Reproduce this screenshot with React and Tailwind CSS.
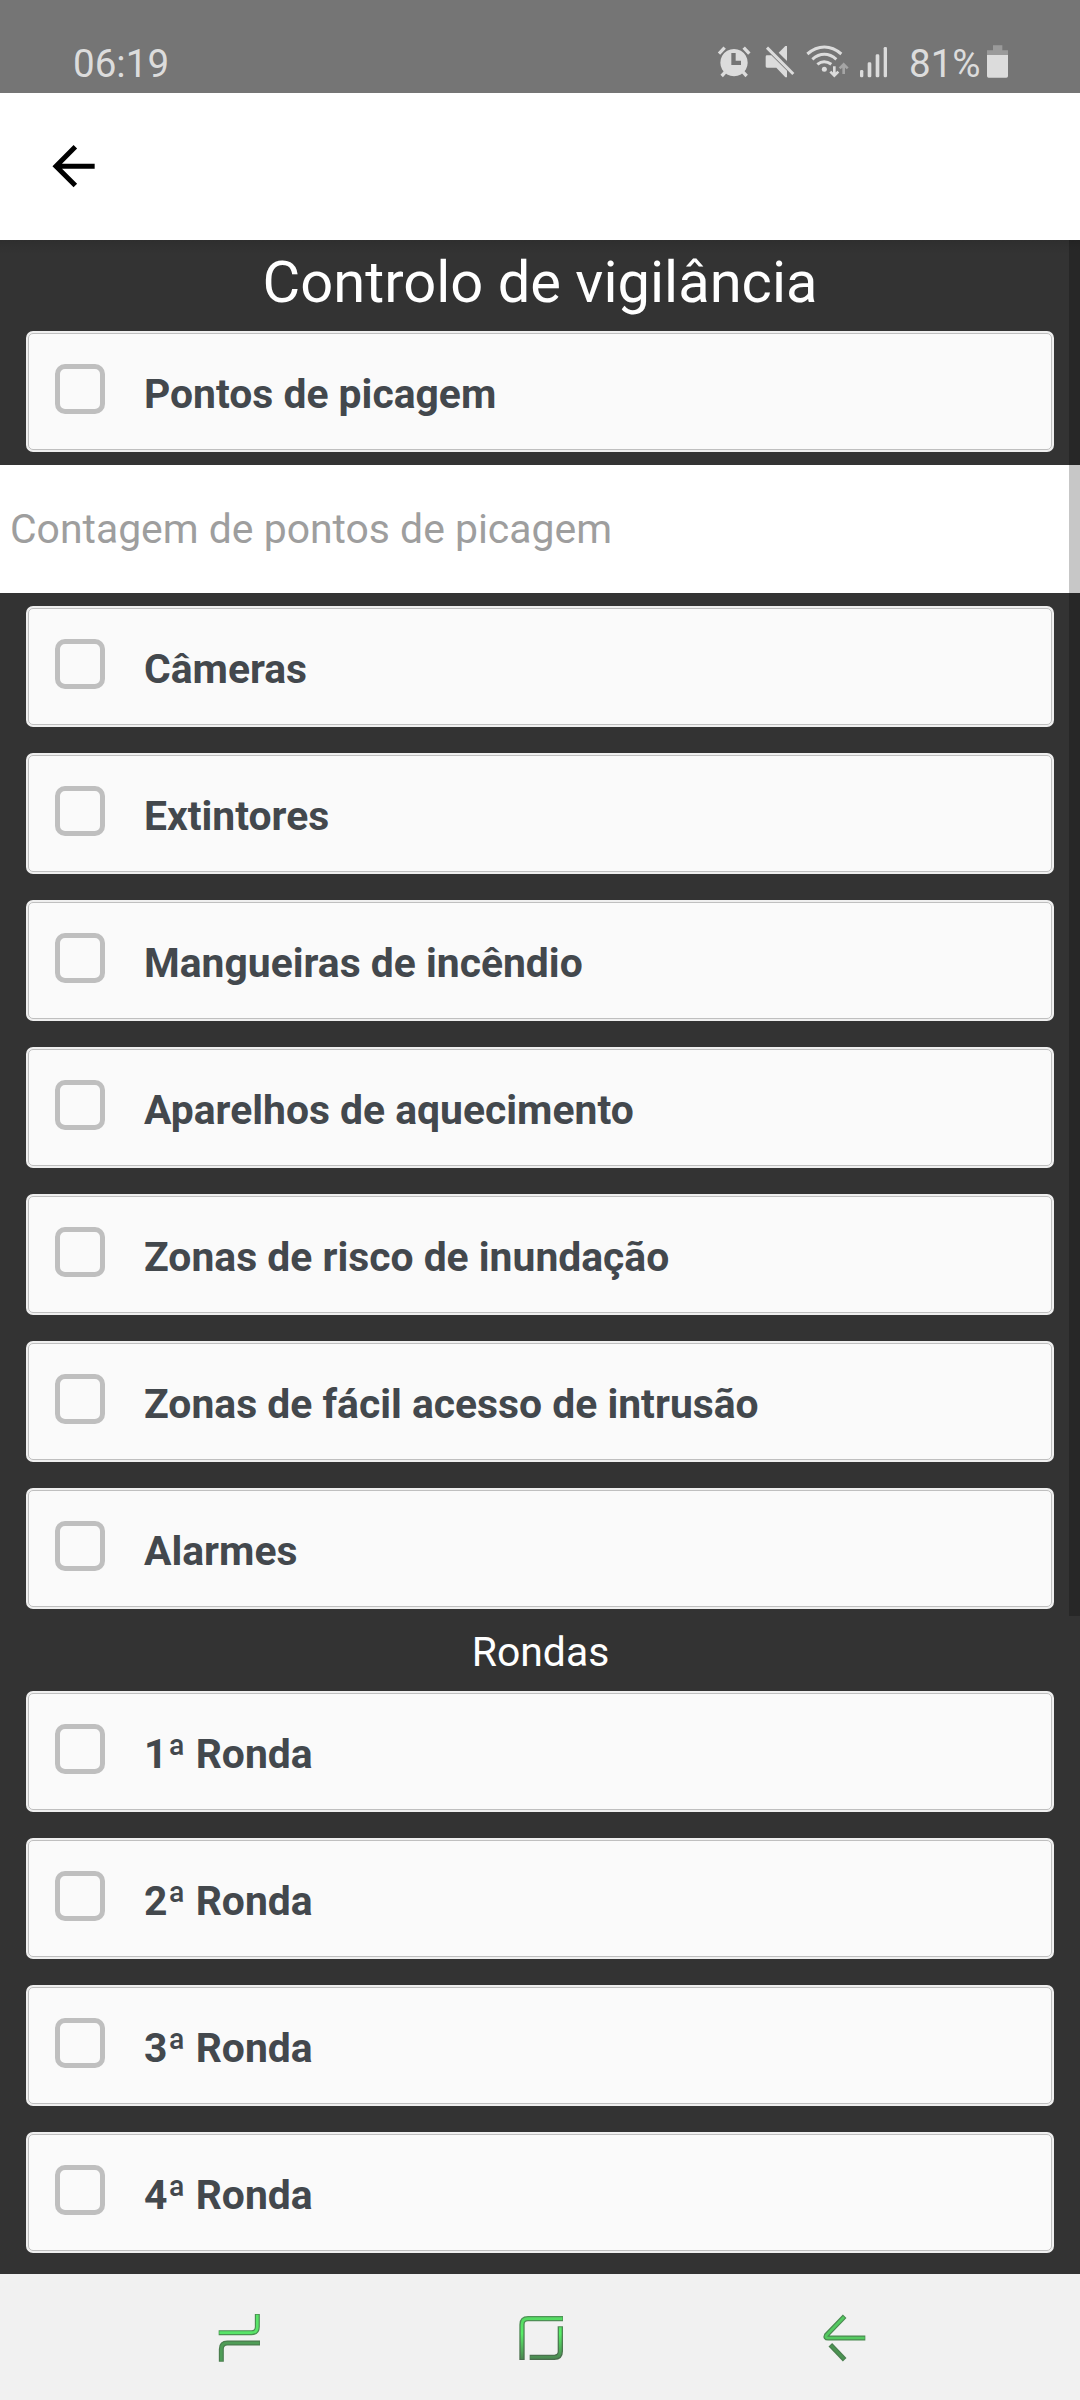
import React from "react";

const CHECKS = [
  "Câmeras",
  "Extintores",
  "Mangueiras de incêndio",
  "Aparelhos de aquecimento",
  "Zonas de risco de inundação",
  "Zonas de fácil acesso de intrusão",
  "Alarmes",
];
const ROUNDS = ["1ª Ronda", "2ª Ronda", "3ª Ronda", "4ª Ronda"];

function CheckCard({ label }) {
  return (
    <div className="mx-[26px] h-[121px] shrink-0 rounded-[7px] border-2 border-[#efefef] bg-[#fafafa]">
      <div className="flex h-full items-start rounded-[5px] border border-[#bfbfbf] pl-[26px]">
        <div className="mt-[30.4px] size-[50px] rounded-[10px] border-5 border-[#bfbfbf]" />
        <div className="mt-[34px] ml-[39px] text-[40.85px] leading-[52px] font-bold whitespace-nowrap text-[#43484d]">
          {label}
        </div>
      </div>
    </div>
  );
}

function StatusBar() {
  return (
    <div className="flex h-[93px] shrink-0 items-start bg-[#757575] pl-[73px] text-[38.6px] leading-[46px] text-[#dcdcdc]">
      <div className="mt-[41px]">06:19</div>
      <div className="mt-[44px] mr-[71px] ml-auto flex items-start">
        <svg className="h-[34px] w-[34px]" viewBox="81 72 102 102" fill="#dcdcdc">
          <path d="M132 87a41 41 0 1 0 .1 0ZM124 99h13v23h16v13h-29Z" fillRule="evenodd" />
          <path d="M87 101l17-18M178 101l-17-18" stroke="#dcdcdc" strokeWidth="10" fill="none" />
          <path d="M95 168l12-13M170 168l-12-13" stroke="#dcdcdc" strokeWidth="10" fill="none" />
        </svg>
        <svg className="ml-[14px] h-[34px] w-[30px]" viewBox="225 72 90 102" fill="#dcdcdc">
          <path d="M231 106h13l47 46v20h-5l-27-29h-28q-4 0-4-4v-29q0-4 4-4Z" />
          <path d="M266 98l20-20h5v45Z" />
          <path d="M231 83l79 79" stroke="#dcdcdc" strokeWidth="9" fill="none" />
        </svg>
        <svg className="ml-[11px] h-[34px] w-[43px]" viewBox="348 72 129 102" fill="none">
          <path d="M352 102Q376 81 403 81T454 102M367 118Q384 103 403 103T439 118M382 133Q402 117 424 133" stroke="#dcdcdc" strokeWidth="9" />
          <circle cx="403" cy="148" r="7.5" fill="#dcdcdc" />
          <path d="M433 139v28M421 155l12 12 12-12" stroke="#dcdcdc" strokeWidth="8" />
          <path d="M461 162v-29M449 145l12-12 12 12" stroke="#a5a5a5" strokeWidth="8" />
        </svg>
        <svg className="ml-[10px] h-[34px] w-[29px]" viewBox="507 72 87 102" fill="#dcdcdc">
          <rect x="510" y="150" width="10" height="22" rx="4" />
          <rect x="533" y="127" width="11" height="45" rx="4" />
          <rect x="557" y="103" width="11" height="69" rx="4" />
          <rect x="581" y="81" width="10" height="91" rx="4" />
        </svg>
        <div className="-mt-[3px] ml-[21px] w-[77px] whitespace-nowrap">81%</div>
        <svg className="h-[34px] w-[23px]" viewBox="888 72 69 102">
          <path d="M909 76h28v15h17v14h-63V91h18Z" fill="#9a9a9a" />
          <path d="M891 105h63v63q0 5-5 5h-53q-5 0-5-5Z" fill="#dcdcdc" />
        </svg>
      </div>
    </div>
  );
}

function NavBar() {
  return (
    <div className="flex h-[126px] shrink-0 items-start bg-[#f1f1f1]">
      <svg className="mt-[38px] ml-[217px] h-[51px] w-[45px]" viewBox="111 156 135 153" fill="none">
        <path d="M116 218h98q18 0 18-18v-38" stroke="#4b8f51" strokeWidth="15" />
        <path d="M118 218h96q18 0 18-18v-36" stroke="#58e468" strokeWidth="8" />
        <path d="M124 305v-38q0-18 18-18h98" stroke="#4a7d4e" strokeWidth="15" />
        <path d="M124 302v-35q0-18 18-18h96" stroke="#4f9d57" strokeWidth="8" />
      </svg>
      <svg className="mt-[40px] ml-[255px] h-[48px] w-[48px]" viewBox="111 162 144 144" fill="none">
        <defs>
          <linearGradient id="edge" x1="0" y1="168" x2="0" y2="300" gradientUnits="userSpaceOnUse">
            <stop offset="0" stopColor="#4f9457" />
            <stop offset="1" stopColor="#4a6d4c" />
          </linearGradient>
          <linearGradient id="core" x1="0" y1="168" x2="0" y2="300" gradientUnits="userSpaceOnUse">
            <stop offset="0" stopColor="#54d862" />
            <stop offset=".4" stopColor="#58ee68" />
            <stop offset="1" stopColor="#4b8250" />
          </linearGradient>
        </defs>
        <path d="M126 300V194q0-18 18-18h105M241 199v75q0 18-18 18h-74" stroke="url(#edge)" strokeWidth="16" />
        <path d="M126 297V194q0-18 18-18h103M241 202v72q0 18-18 18h-72" stroke="url(#core)" strokeWidth="8" />
      </svg>
      <svg className="mt-[39px] ml-[257px] h-[50px] w-[45px]" viewBox="126 159 135 150" fill="none" strokeLinejoin="round">
        <path d="M194 169l-55 57q-4 8 5 8h112" stroke="#4b8a51" strokeWidth="15" />
        <path d="M192 171l-53 55q-4 8 5 8h110" stroke="#55ca61" strokeWidth="8" />
        <path d="M151 254l43 45" stroke="#4a7d4e" strokeWidth="15" />
        <path d="M153 256l39 41" stroke="#4b9352" strokeWidth="8" />
      </svg>
    </div>
  );
}

export default function App() {
  return (
    <div className="flex h-[2400px] w-[1080px] flex-col overflow-hidden bg-[#333333] font-['Roboto',sans-serif]">
      <StatusBar />
      <header className="flex h-[147px] shrink-0 items-center bg-white pl-[52px]">
        <svg className="h-[43px] w-[44px]" viewBox="156 376 132 129" fill="none" stroke="#000" strokeWidth="15">
          <path d="M284 439.500H168M226 381.500l-58 58 58 58" />
        </svg>
      </header>
      <main className="relative flex flex-1 flex-col">
        <div className="pointer-events-none absolute top-0 left-0 h-[14px] w-full bg-gradient-to-b from-black/10 to-transparent" />
        <h1 className="mb-[13px] h-[78px] text-center text-[57.9px] leading-[84px] text-white">Controlo de vigilância</h1>
        <CheckCard label="Pontos de picagem" />
        <div className="my-[13px] flex h-[128px] shrink-0 items-center bg-white pt-[2px] pl-[10px] text-[40.9px] text-[#9e9e9e]">
          Contagem de pontos de picagem
        </div>
        <div className="flex flex-col gap-[26px]">
          {CHECKS.map((c) => (
            <CheckCard key={c} label={c} />
          ))}
        </div>
        <h2 className="my-[13px] h-[56px] pl-px text-center text-[40.9px] leading-[60px] text-white">Rondas</h2>
        <div className="flex flex-col gap-[26px]">
          {ROUNDS.map((r) => (
            <CheckCard key={r} label={r} />
          ))}
        </div>
        <div className="absolute top-0 right-0 h-[1376px] w-[11px] bg-black/[.22]" />
      </main>
      <NavBar />
    </div>
  );
}
